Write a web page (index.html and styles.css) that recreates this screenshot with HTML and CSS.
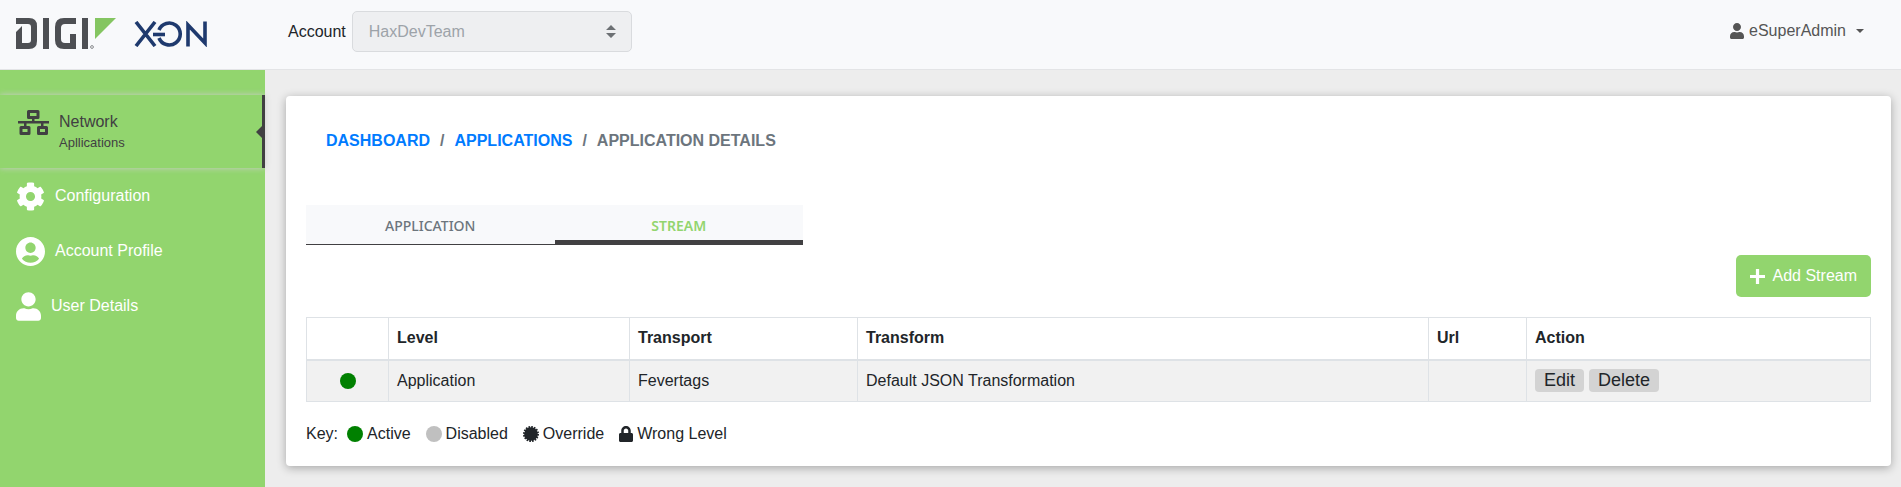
FILE: index.html
```html
<!DOCTYPE html>
<html lang="en">
<head>
  <meta charset="UTF-8">
  <title>Digi X-ON – Application Details</title>
  <link rel="stylesheet" href="styles.css">
</head>
<body>
  <header class="topbar">
    <a href="#" class="brand" aria-label="Digi X-ON">
      <svg class="logo-digi" viewBox="0 0 100 32">
        <g fill="#4d4f53">
          <path d="M0 0h13q8 0 8 8v15q0 8-8 8H0V14l6-6v17h6q3 0 3-3V9q0-3-3-3H0z"/>
          <path d="M27 0h6v31h-6z"/>
          <path d="M60 0v6H49q-4 0-4 4v11q0 4 4 4h5v-9h6v15H48q-9 0-9-9V9q0-9 9-9z"/>
          <path d="M66 0h6v31h-6z"/>
        </g>
        <circle cx="76" cy="29" r="1.4" fill="none" stroke="#8a8c8f" stroke-width="1"/>
        <path d="M79 0h21L79 21z" fill="#84c561"/>
      </svg>
      <svg class="logo-xon" viewBox="0 0 74 26">
        <g fill="none" stroke="#1f3a6e" stroke-width="3.6">
          <path d="M2 1l19 24M21 1L2 25"/>
          <path d="M19 13.500h12"/>
          <path d="M25 9a11 11 0 1 1 0 8"/>
          <path d="M54 25.500V4l17 18V.500"/>
        </g>
      </svg>
    </a>
    <div class="account">
      <label for="account">Account</label>
      <select id="account" disabled>
        <option>HaxDevTeam</option>
      </select>
      <svg class="select-arrows" viewBox="0 0 10 13"><path d="M0 5l5-5 5 5zM0 8h10l-5 5z"/></svg>
    </div>
    <button class="user-menu">
      <svg class="icon-sm" viewBox="0 0 448 512"><use href="#i-user"/></svg>
      eSuperAdmin
      <span class="caret"></span>
    </button>
  </header>

  <div class="page">
    <nav class="sidebar">
      <a href="#" class="nav-item active">
        <svg class="icon-network" viewBox="0 0 31 25">
          <g fill="none" stroke="currentColor" stroke-width="3" stroke-linejoin="round">
            <path d="M10.500 1.500h9.500v6h-9.500zM3 17.500h8v6H3zM20.500 17.500h8v6h-8z"/>
          </g>
          <path d="M0 11h31v2.500H0zM14 8h2.500v4H14zM6 13h2.500v4H6zM23 13h2.500v4H23z"/>
        </svg>
        <span>Network<small>Apllications</small></span>
      </a>
      <a href="#" class="nav-item">
        <svg class="icon-lg" viewBox="0 0 512 512"><path d="M487.400 315.700l-42.600-24.600c4.300-23.200 4.300-47 0-70.200l42.600-24.600c4.900-2.800 7.100-8.600 5.500-14-11.100-35.600-30-67.800-54.700-94.600-3.800-4.100-10-5.100-14.800-2.300L380.800 110c-17.900-15.400-38.500-27.300-60.800-35.100V25.800c0-5.600-3.900-10.500-9.400-11.700-36.700-8.200-74.300-7.800-109.200 0-5.500 1.200-9.400 6.100-9.400 11.700V75c-22.200 7.900-42.800 19.800-60.800 35.100L88.700 85.500c-4.900-2.800-11-1.900-14.800 2.300-24.700 26.700-43.600 58.900-54.700 94.600-1.700 5.400.6 11.200 5.500 14L67.300 221c-4.300 23.200-4.300 47 0 70.200l-42.600 24.600c-4.900 2.800-7.100 8.600-5.500 14 11.100 35.600 30 67.800 54.700 94.600 3.800 4.100 10 5.100 14.800 2.300l42.600-24.600c17.900 15.400 38.500 27.300 60.800 35.100v49.200c0 5.600 3.900 10.500 9.400 11.700 36.700 8.200 74.300 7.800 109.200 0 5.500-1.200 9.400-6.100 9.400-11.700v-49.200c22.200-7.900 42.800-19.800 60.800-35.100l42.600 24.600c4.900 2.800 11 1.900 14.800-2.300 24.700-26.700 43.600-58.900 54.700-94.600 1.500-5.500-.7-11.300-5.600-14.100zM256 336c-44.100 0-80-35.900-80-80s35.900-80 80-80 80 35.900 80 80-35.900 80-80 80z"/></svg>
        <span>Configuration</span>
      </a>
      <a href="#" class="nav-item">
        <svg class="icon-lg" viewBox="0 8 496 496"><path d="M248 8C111 8 0 119 0 256s111 248 248 248 248-111 248-248S385 8 248 8zm0 96c48.600 0 88 39.400 88 88s-39.400 88-88 88-88-39.400-88-88 39.400-88 88-88zm0 344c-58.700 0-111.300-26.600-146.500-68.200 18.800-35.400 55.600-59.800 98.500-59.800 2.400 0 4.800.4 7.100 1.100 13 4.200 26.600 6.900 40.900 6.900 14.300 0 28-2.700 40.900-6.900 2.300-.7 4.700-1.100 7.100-1.100 42.900 0 79.700 24.400 98.500 59.800C359.300 421.400 306.700 448 248 448z"/></svg>
        <span>Account Profile</span>
      </a>
      <a href="#" class="nav-item">
        <svg class="icon-user" viewBox="0 0 448 512"><path id="i-user" d="M224 256c70.700 0 128-57.300 128-128S294.700 0 224 0 96 57.300 96 128s57.300 128 128 128zm89.600 32h-16.700c-22.200 10.200-46.900 16-72.900 16s-50.600-5.800-72.900-16h-16.700C60.200 288 0 348.200 0 422.400V464c0 26.500 21.500 48 48 48h352c26.500 0 48-21.500 48-48v-41.600c0-74.200-60.200-134.400-134.400-134.400z"/></svg>
        <span>User Details</span>
      </a>
    </nav>

    <main class="card">
      <nav class="breadcrumb">
        <a href="#">DASHBOARD</a>
        <span>/</span>
        <a href="#">APPLICATIONS</a>
        <span>/</span>
        <span>APPLICATION DETAILS</span>
      </nav>

      <div class="tabs">
        <button class="tab">APPLICATION</button>
        <button class="tab active">STREAM</button>
      </div>

      <div class="actions">
        <button class="btn-add">
          <svg class="icon-plus" viewBox="0 0 14 14"><path d="M5.500 0h3v5.500H14v3H8.500V14h-3V8.500H0v-3h5.500z"/></svg>
          Add Stream
        </button>
      </div>

      <table class="streams">
        <colgroup>
          <col class="col-status">
          <col class="col-level">
          <col class="col-transport">
          <col class="col-transform">
          <col class="col-url">
          <col class="col-action">
        </colgroup>
        <thead>
          <tr>
            <th></th>
            <th>Level</th>
            <th>Transport</th>
            <th>Transform</th>
            <th>Url</th>
            <th>Action</th>
          </tr>
        </thead>
        <tbody>
          <tr>
            <td><span class="dot dot-active"></span></td>
            <td>Application</td>
            <td>Fevertags</td>
            <td>Default JSON Transformation</td>
            <td></td>
            <td><div class="row-actions"><button>Edit</button><button>Delete</button></div></td>
          </tr>
        </tbody>
      </table>

      <div class="key">
        <span>Key:</span>
        <span class="key-item"><span class="dot dot-active"></span>Active</span>
        <span class="key-item"><span class="dot dot-disabled"></span>Disabled</span>
        <span class="key-item">
          <svg class="icon-badge" viewBox="0 0 16 16"><circle cx="8" cy="8" r="6.8"/><circle cx="8" cy="8" r="7" fill="none" stroke="currentColor" stroke-width="2" stroke-dasharray="1.665 1.084"/></svg>
          Override
        </span>
        <span class="key-item">
          <svg class="icon-sm" viewBox="0 0 448 512"><path d="M400 224h-24v-72C376 68.200 307.800 0 224 0S72 68.200 72 152v72H48c-26.500 0-48 21.500-48 48v192c0 26.500 21.500 48 48 48h352c26.500 0 48-21.500 48-48V272c0-26.500-21.500-48-48-48zm-104 0H152v-72c0-39.700 32.300-72 72-72s72 32.300 72 72v72z"/></svg>
          Wrong Level
        </span>
      </div>
    </main>
  </div>
</body>
</html>
```

FILE: styles.css
```css
* {
  box-sizing: border-box;
}

body {
  margin: 0;
  min-height: 100vh;
  display: flex;
  flex-direction: column;
  font-family: "Liberation Sans", Arial, sans-serif;
  font-size: 16px;
  line-height: 24px;
  color: #212529;
  background: #ededed;
}

a {
  text-decoration: none;
}

button {
  font: inherit;
  border: none;
  cursor: pointer;
}

svg {
  display: block;
  flex-shrink: 0;
  fill: currentColor;
}

/* top bar */
.topbar {
  display: flex;
  align-items: flex-start;
  height: 70px;
  padding: 11px 37px 0 16px;
  background: #f8f9fb;
  border-bottom: 1px solid #e3e4e6;
}

.brand {
  display: flex;
  align-items: center;
  gap: 18px;
  width: 272px;
  padding-top: 7px;
}

.logo-digi {
  width: 100px;
  height: 32px;
}

.logo-xon {
  width: 74px;
  height: 26px;
}

.account {
  display: flex;
  align-items: center;
  gap: 6px;
  position: relative;
}

.account select {
  appearance: none;
  width: 280px;
  height: 41px;
  padding: 0 16px;
  font: inherit;
  color: #9da3a9;
  opacity: 1;
  background: #eeeff1;
  border: 1px solid #d9dbde;
  border-radius: 5px;
}

.select-arrows {
  position: absolute;
  right: 16px;
  width: 10px;
  height: 13px;
  color: #6c7074;
}

.user-menu {
  display: flex;
  align-items: center;
  gap: 5px;
  margin-left: auto;
  padding: 8px 0;
  color: #555;
  background: none;
}

.caret {
  margin-left: 5px;
  border: 4px solid transparent;
  border-top-color: currentColor;
  border-bottom: 0;
}

.icon-sm {
  width: 14px;
  height: 16px;
}

/* sidebar */
.page {
  flex: 1;
  display: flex;
}

.sidebar {
  width: 265px;
  flex-shrink: 0;
  padding-top: 25px;
  background: #92d56e;
}

.nav-item {
  display: flex;
  align-items: center;
  gap: 10px;
  height: 54px;
  margin-top: 1px;
  padding: 0 16px;
  color: #fff;
}

.nav-item.active {
  position: relative;
  align-items: flex-start;
  height: 73px;
  margin-top: 0;
  padding: 15px 18px;
  color: #414042;
  border-right: 3px solid #414042;
  box-shadow: 0 0 6px #ccc;
}

.nav-item.active::after {
  content: "";
  position: absolute;
  right: 0;
  top: 31px;
  border: 6px solid transparent;
  border-right-color: #414042;
  border-left: 0;
}

.nav-item small {
  display: block;
  font-size: 13px;
  line-height: 18px;
}

.icon-network {
  width: 31px;
  height: 25px;
}

.icon-lg {
  width: 29px;
  height: 29px;
}

.icon-user {
  width: 25px;
  height: 29px;
}

/* content */
.card {
  flex: 1;
  align-self: flex-start;
  margin: 26px 10px 20px 21px;
  padding: 33px 20px 20px;
  background: #fff;
  border-radius: 4px;
  box-shadow: 0 2px 10px rgba(0, 0, 0, 0.3);
}

.breadcrumb {
  display: flex;
  gap: 10px;
  padding: 0 20px;
  font-weight: bold;
  color: #6c757d;
}

.breadcrumb a {
  color: #007bff;
}

.tabs {
  display: flex;
  width: 497px;
  margin-top: 52px;
}

.tab {
  flex: 1;
  height: 40px;
  padding: 2px 0 0;
  font-family: "Noto Sans", sans-serif;
  font-size: 14px;
  font-weight: 500;
  color: #6c757d;
  background: #f8f9fb;
  box-shadow: inset 0 -1px #414042;
}

.tab.active {
  font-weight: 600;
  color: #92d56e;
  box-shadow: inset 0 -5px #414042;
}

.actions {
  display: flex;
  justify-content: flex-end;
  margin: 10px 0 20px;
}

.btn-add {
  display: flex;
  align-items: center;
  gap: 8px;
  height: 42px;
  padding: 0 14px;
  color: #fff;
  background: #92d56e;
  border-radius: 5px;
}

.icon-plus {
  width: 15px;
  height: 15px;
}

.streams {
  width: 100%;
  table-layout: fixed;
  border-collapse: collapse;
}

.streams th,
.streams td {
  height: 42px;
  padding: 0 8px;
  text-align: left;
  border: 1px solid #dee2e6;
}

.streams thead th {
  border-bottom-width: 2px;
}

.streams tbody tr {
  background: #f1f1f1;
}

.streams td:first-child .dot {
  margin: 0 auto;
}

.col-status { width: 82px; }
.col-level { width: 241px; }
.col-transport { width: 228px; }
.col-url { width: 98px; }
.col-action { width: 344px; }

.row-actions {
  display: flex;
  gap: 5px;
}

.row-actions button {
  padding: 0 9px;
  font-size: 18px;
  line-height: 23px;
  color: #212529;
  background: #d3d3d3;
  border-radius: 4px;
}

.dot {
  display: block;
  width: 16px;
  height: 16px;
  border-radius: 50%;
}

.dot-active {
  background: #008000;
}

.dot-disabled {
  background: #c0c0c0;
}

.key {
  display: flex;
  gap: 15px;
  margin-top: 20px;
}

.key > :first-child {
  margin-right: -6px;
}

.key-item {
  display: flex;
  align-items: center;
  gap: 4px;
}

.icon-badge {
  width: 16px;
  height: 16px;
}
```
